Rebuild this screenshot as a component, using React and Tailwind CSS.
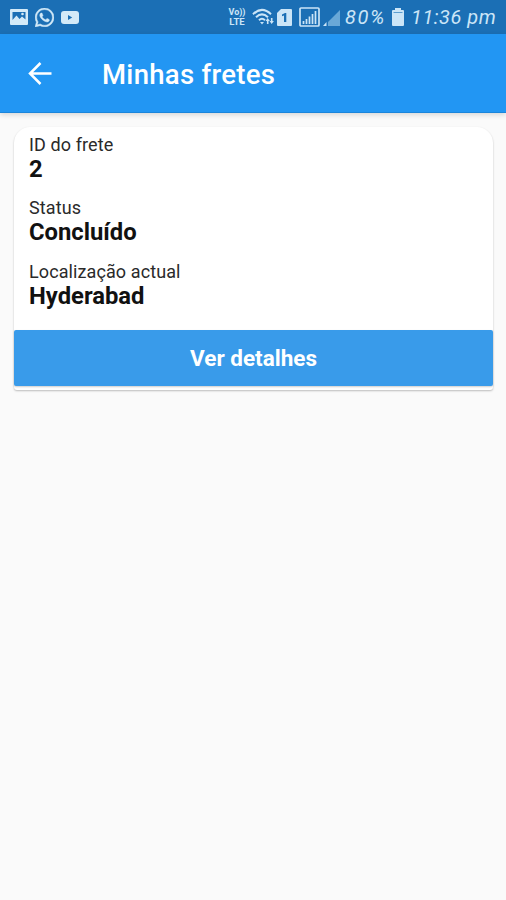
import React from 'react';

function StatusLeft() {
  return (
    <div className="flex items-center gap-[7px] text-[#d3eaf8]">
      <svg width="18" height="16" viewBox="0 0 18 16">
        <path fillRule="evenodd" fill="currentColor" d="M1 0h16a1 1 0 0 1 1 1v14a1 1 0 0 1-1 1H1a1 1 0 0 1-1-1V1a1 1 0 0 1 1-1zM2.500 3v8l4-4.500 3 3.500 2.500-2.500 3.500 3V3z" />
        <circle cx="12.500" cy="5" r="1.300" fill="currentColor" />
      </svg>
      <svg width="19" height="19" viewBox="0 0 24 24" fill="currentColor" stroke="currentColor" strokeWidth="0.600">
        <path d="M.06 24l1.69-6.160a11.870 11.870 0 0 1-1.590-5.950C.16 5.340 5.500 0 12.050 0a11.820 11.820 0 0 1 8.410 3.490 11.820 11.820 0 0 1 3.480 8.410c0 6.560-5.340 11.890-11.890 11.890a11.900 11.900 0 0 1-5.690-1.450L.06 24zm6.600-3.810c1.680 1 3.280 1.600 5.390 1.600 5.450 0 9.890-4.440 9.890-9.890 0-5.460-4.420-9.890-9.880-9.890-5.450 0-9.890 4.430-9.890 9.880 0 2.230.65 3.890 1.750 5.640l-1 3.650 3.740-.99zM18.040 14.730c-.07-.12-.27-.2-.57-.35-.3-.15-1.760-.87-2.030-.97-.27-.1-.47-.15-.67.15-.2.300-.77.970-.94 1.160-.17.200-.35.220-.64.070-.3-.15-1.260-.460-2.390-1.470-.88-.79-1.480-1.760-1.650-2.060-.17-.3-.02-.46.13-.61.130-.13.300-.35.450-.52.150-.17.200-.3.300-.5.100-.2.050-.37-.02-.52-.080-.15-.67-1.610-.92-2.210-.24-.58-.49-.5-.67-.51l-.57-.01c-.2 0-.52.070-.79.370-.27.300-1.040 1.020-1.040 2.480s1.070 2.880 1.210 3.070c.15.200 2.100 3.200 5.080 4.490.71.310 1.260.490 1.690.630.71.230 1.360.190 1.870.120.57-.09 1.760-.72 2.010-1.410.25-.7.250-1.290.17-1.410z" />
      </svg>
      <svg width="18" height="13" viewBox="0 0 18 13">
        <rect width="18" height="13" rx="3" fill="currentColor" />
        <path d="M7 4v5l4.200-2.500z" fill="#1b6fb5" />
      </svg>
    </div>
  );
}

function StatusRight() {
  return (
    <div className="flex items-center text-[#cbe5f7]">
      <div className="w-[18px] text-center text-[9.500px] leading-[10px] font-bold whitespace-nowrap">
        <div className="text-[9px]">Vo))</div>
        <div>LTE</div>
      </div>
      <svg className="ml-[6px]" width="23" height="18" viewBox="0 0 23 18" fill="none" stroke="currentColor" strokeWidth="2">
        <path d="M1 6.200Q10 -2.400 19 6.200M4 9.200q6-5.600 12 0M7 12.200q3-2.800 6 0" />
        <path d="M8 14h4l-2 2.500z" fill="currentColor" stroke="none" />
        <path d="M13.500 13l2.200-3 2.200 3h-1.400v3h-1.600v-3zM17.500 13h1.400v-3h1.600v3h1.400l-2.200 3z" fill="currentColor" stroke="none" />
      </svg>
      <svg className="ml-[2px]" width="15" height="17" viewBox="0 0 15 17">
        <path d="M4 0h10q1 0 1 1v15q0 1-1 1H1q-1 0-1-1V4z" fill="currentColor" />
        <path d="M5 5.500l3-1.500h1.300v9H7V6.600l-2 .700z" fill="#1b6fb5" />
      </svg>
      <svg className="ml-[7px]" width="21" height="20" viewBox="0 0 21 20">
        <rect x="1" y="1" width="19" height="18" rx="1" fill="none" stroke="currentColor" strokeWidth="1.700" />
        <path d="M4.500 17v-3M7.500 17v-5M10.500 17V9.500M13.500 17V7M16.500 17V4" stroke="currentColor" strokeWidth="1.700" />
      </svg>
      <svg className="ml-[3px]" width="18" height="17" viewBox="0 0 18 17">
        <path d="M0 17l3.500-4v4z" fill="currentColor" />
        <path d="M5 17V13L17 1v16z" fill="#69a8d7" />
      </svg>
      <span className="ml-[4px] w-[43px] text-[20px] leading-5 font-normal italic tracking-[1.600px] whitespace-nowrap">80%</span>
      <svg className="ml-[4px]" width="12" height="18" viewBox="0 0 12 18">
        <path d="M3 0h6v2h2q1 0 1 1v14q0 1-1 1H1q-1 0-1-1V3q0-1 1-1h2z" fill="currentColor" />
        <path d="M1.500 4.500h9" stroke="#5b9dcf" />
      </svg>
      <span className="ml-[7px] w-[85px] text-[20px] leading-5 font-normal italic tracking-[0.500px] whitespace-nowrap">11:36 pm</span>
    </div>
  );
}

function Field({ label, value }) {
  return (
    <div className="mb-[11.400px] text-[#111]">
      <div className="h-[23px] text-[18px] leading-[23px] font-normal tracking-[0.100px] text-[#2a2a2a]">{label}</div>
      <div className="h-[29px] text-[23.800px] leading-[27px] font-bold">{value}</div>
    </div>
  );
}

export default function App() {
  return (
    <div className="flex h-[900px] w-[506px] flex-col overflow-hidden bg-[#fafafa] font-[Roboto,sans-serif]">
      <div className="flex h-[34px] shrink-0 items-center justify-between bg-[#1b6fb5] pr-[10px] pl-[10px]">
        <StatusLeft />
        <StatusRight />
      </div>
      <header className="flex h-[79px] shrink-0 items-center border-b border-[#1b85db] bg-[#2296f3] pl-[28px] text-white shadow-[0_2px_5px_rgba(0,0,0,0.14)]">
        <svg width="24" height="24" viewBox="0 0 24 24" fill="none" stroke="currentColor" strokeWidth="2.500">
          <path d="M23.500 12.500H2M12.500 2L2 12.500l10.500 10.500" />
        </svg>
        <h1 className="ml-[50px] pt-[4px] text-[27.500px] font-medium tracking-[0.300px]">Minhas fretes</h1>
      </header>
      <main className="pt-[14px] pr-[13px] pl-[14px]">
        <section className="h-[263px] rounded-t-[16px] rounded-b-[3px] bg-white pt-[6px] shadow-[0_1px_2px_rgba(0,0,0,0.25)]">
          <div className="h-[197px] px-[15px]">
            <Field label="ID do frete" value="2" />
            <Field label="Status" value="Concluído" />
            <Field label="Localização actual" value="Hyderabad" />
          </div>
          <button className="block h-[56px] w-full rounded-[2px] bg-[#399bea] pt-px text-[22.500px] font-bold text-white shadow-[0_1px_2px_rgba(0,0,0,0.2)]">
            Ver detalhes
          </button>
        </section>
      </main>
    </div>
  );
}
